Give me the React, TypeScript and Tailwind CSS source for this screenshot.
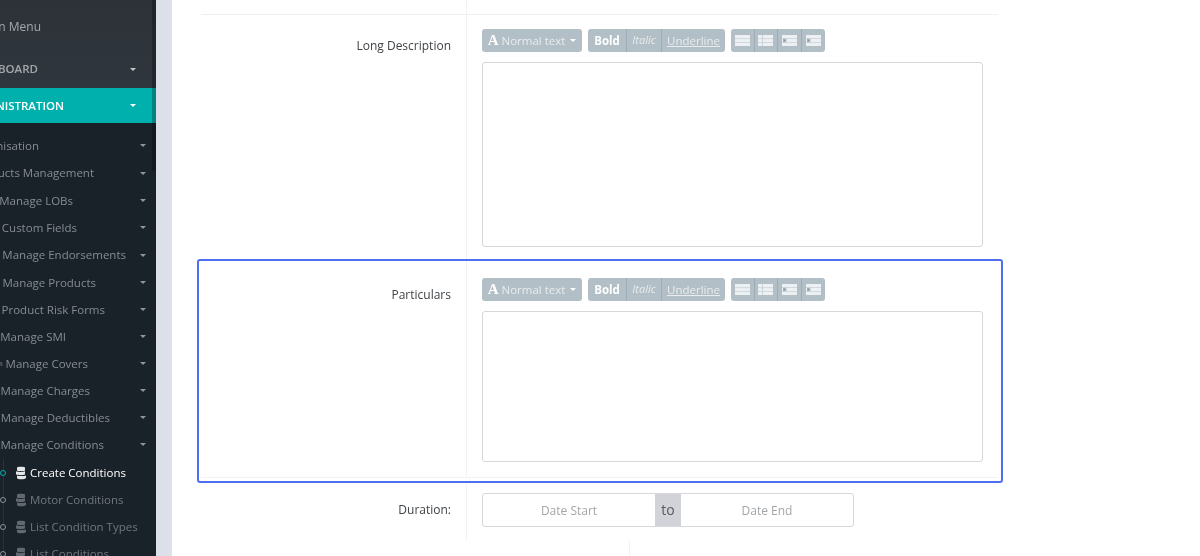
const font = { fontFamily: '"Open Sans", "Noto Sans", sans-serif' }

const menu = [
  { label: 'Organisation', end: 'w-[39px]', h: 'h-[27px]' },
  { label: 'Products Management', end: 'w-[94px]', h: 'h-[28px]' },
  { label: 'Manage LOBs', end: 'w-[73px]', h: 'h-[27px]' },
  { label: 'Custom Fields', end: 'w-[77px]', h: 'h-[27px]' },
  { label: 'Manage Endorsements', end: 'w-[126px]', h: 'h-[28px]' },
  { label: 'Manage Products', end: 'w-[96px]', h: 'h-[27px]' },
  { label: 'Product Risk Forms', end: 'w-[105px]', h: 'h-[27px]' },
  { label: 'Manage SMI', end: 'w-[66px]', h: 'h-[27px]' },
  { label: 'Manage Covers', end: 'w-[88px]', h: 'h-[27px]', icon: true },
  { label: 'Manage Charges', end: 'w-[90px]', h: 'h-[27px]' },
  { label: 'Manage Deductibles', end: 'w-[110px]', h: 'h-[27px]' },
  { label: 'Manage Conditions', end: 'w-[104px]', h: 'h-[27px]' },
]

const subMenu = [
  { label: 'Create Conditions', active: true },
  { label: 'Motor Conditions', active: false },
  { label: 'List Condition Types', active: false },
  { label: 'List Conditions', active: false },
]

function Caret({ color = 'border-t-[#8e959b]' }: { readonly color?: string }) {
  return <span className={`h-0 w-0 border-x-[3.5px] border-t-[3.5px] border-x-transparent ${color}`} />
}

function StackIcon({ color }: { readonly color: string }) {
  return (
    <svg width="10" height="14" viewBox="0 0 10 14" fill={color}>
      <path d="M1 1.5C1 .4 9 .4 9 1.5V4.4C9 5.2 1 5.2 1 4.4Z" />
      <path d="M0 5.3C2 6.1 7 6.1 9 5.3V8.6C7 9.4 2 9.4 0 8.6Z" />
      <path d="M1 9.5C3 10.3 8 10.3 10 9.5V12C9 13.8 1 13.8 1 12Z" />
    </svg>
  )
}

function Sidebar() {
  return (
    <aside className="relative w-[156px] shrink-0 overflow-hidden bg-[#1a2229] text-[11.5px]">
      <div className="h-[88px] bg-gradient-to-b from-[#2c3238] to-[#30363d] text-[#a3a8ac]">
        <div className="flex h-[54px] items-center">
          <div className="flex w-[41px] justify-end whitespace-nowrap text-[12px]">Main Menu</div>
        </div>
        <div className="flex h-[30px] items-center pr-[20px] font-semibold">
          <div className="flex w-[38px] justify-end whitespace-nowrap">DASHBOARD</div>
          <span className="ml-auto flex">
            <Caret color="border-t-[#c4c7ca]" />
          </span>
        </div>
      </div>

      <div className="flex h-[35px] items-center bg-[#00b0ad] pr-[20px] font-semibold text-white">
        <div className="flex w-[64px] justify-end whitespace-nowrap">ADMINISTRATION</div>
        <span className="ml-auto flex">
          <Caret color="border-t-white" />
        </span>
      </div>

      <div className="pt-[9px] text-[#868c91]">
        {menu.map((item) => (
          <div key={item.label} className={`flex items-center pr-[10px] ${item.h}`}>
            <div className={`flex items-center justify-end gap-[3px] whitespace-nowrap ${item.end}`}>
              {item.icon && <StackIcon color="#61686e" />}
              {item.label}
            </div>
            <span className="ml-auto flex">
              <Caret />
            </span>
          </div>
        ))}
        <div className="relative mt-[1px]">
          <div className="absolute bottom-0 left-[3px] top-0 w-px bg-[#2a333a]" />
          {subMenu.map((sub) => (
            <div key={sub.label} className="relative flex h-[27px] items-center">
              <span
                className={`h-[6px] w-[6px] rounded-full border bg-[#1a2229] ${
                  sub.active ? 'border-[#00b0ad]' : 'border-[#8e959b]'
                }`}
              />
              <span className="ml-[10px] flex">
                <StackIcon color={sub.active ? '#e4e6e8' : '#61686e'} />
              </span>
              <span className={`ml-[4px] whitespace-nowrap ${sub.active ? 'text-white' : 'text-[#70777c]'}`}>
                {sub.label}
              </span>
            </div>
          ))}
        </div>
      </div>

      {/* scrollbar thumb */}
      <div className="absolute right-0 top-0 h-[171px] w-[4px] bg-black/25" />
    </aside>
  )
}

function ListIcon({ kind }: { readonly kind: number }) {
  return (
    <svg width="15" height="11" viewBox="0 0 15 11">
      <rect width="15" height="11" fill="#eef1f3" />
      {kind === 0 && (
        <>
          <rect x="0" y="3.4" width="15" height="0.7" fill="#c3ced4" />
          <rect x="0" y="7" width="15" height="0.7" fill="#c3ced4" />
        </>
      )}
      {kind === 1 && (
        <>
          <rect x="4" y="0" width="0.8" height="11" fill="#c3ced4" />
          <rect x="0" y="3.4" width="15" height="0.7" fill="#c3ced4" />
          <rect x="0" y="7" width="15" height="0.7" fill="#c3ced4" />
        </>
      )}
      {kind >= 2 && (
        <>
          <rect x="0" y="3" width="15" height="0.7" fill="#c3ced4" />
          <rect x="0" y="7.3" width="15" height="0.7" fill="#c3ced4" />
          <rect x="1" y="3.7" width="3.5" height="3.6" fill="#b2bfc6" />
          <path d="M1.6 4L3.6 5.5L1.6 7Z" fill="#8a8f98" />
        </>
      )}
    </svg>
  )
}

function EditorToolbar() {
  return (
    <div className="flex h-[23px] gap-[6px] text-[11.5px] text-[#e8ecee]">
      <div className="flex w-[100px] items-center justify-center gap-[3px] rounded-[3px] bg-[#b2bfc6]">
        <span className="text-[15px] font-bold text-white" style={{ fontFamily: '"Liberation Serif", serif' }}>
          A
        </span>
        <span>Normal text</span>
        <span className="ml-[2px] flex">
          <Caret color="border-t-white" />
        </span>
      </div>
      <div className="flex divide-x divide-[#9eadb5] overflow-hidden rounded-[3px] bg-[#b2bfc6]">
        <div className="flex w-[39px] items-center justify-center text-[11.5px] font-bold text-white">Bold</div>
        <div className="flex w-[35px] items-center justify-center text-[11px] italic">Italic</div>
        <div className="flex w-[63px] items-center justify-center underline">Underline</div>
      </div>
      <div className="flex divide-x divide-[#9eadb5] overflow-hidden rounded-[3px] bg-[#b2bfc6]">
        {[0, 1, 2, 3].map((kind) => (
          <div key={kind} className="flex w-[23.5px] items-center justify-center">
            <ListIcon kind={kind} />
          </div>
        ))}
      </div>
    </div>
  )
}

function Label({ text }: { readonly text: string }) {
  return <div className="w-[250px] shrink-0 text-right text-[12px] text-[#3f4347]">{text}</div>
}

export default function App() {
  return (
    <div className="flex h-[556px] w-[1200px] overflow-hidden bg-white blur-[0.4px]" style={font}>
      <Sidebar />
      <div className="w-[16px] shrink-0 bg-[#dce1e9]" />
      <main className="flex-1 pl-[29px]">
        <div className="w-[797px]">
          {/* previous row */}
          <div className="h-[15px] border-b border-[#f0f0f0]">
            <div className="ml-[265px] h-full w-px bg-[#f2f2f2]" />
          </div>

          {/* Long Description */}
          <div className="flex h-[244px]">
            <div className="w-[266px] shrink-0 border-r border-[#f2f2f2] pr-[15px] pt-[22px]">
              <Label text="Long Description" />
            </div>
            <div className="flex-1 pl-[15px] pt-[14px]">
              <EditorToolbar />
              <div className="mt-[10px] h-[185px] w-[501px] rounded-[3px] border border-[#d5d7da] bg-white" />
            </div>
          </div>

          {/* Particulars, focused */}
          <div className="-ml-[4px] -mr-[5px] flex h-[224px] rounded-[3px] border-2 border-[#4f6ff0]">
            <div className="ml-[2px] mr-[3px] flex h-[217px] flex-1 border-b border-[#f2f2f2]">
              <div className="w-[266px] shrink-0 border-r border-[#f2f2f2] pr-[15px] pt-[25px]">
                <Label text="Particulars" />
              </div>
              <div className="flex-1 pl-[15px] pt-[17px]">
                <EditorToolbar />
                <div className="mt-[10px] h-[151px] w-[501px] rounded-[3px] border border-[#d5d7da] bg-white" />
              </div>
            </div>
          </div>

          {/* Duration */}
          <div className="flex h-[58px]">
            <div className="w-[266px] shrink-0 border-r border-[#f2f2f2] pr-[15px] pt-[18px]">
              <Label text="Duration:" />
            </div>
            <div className="flex-1 pl-[15px] pt-[10px]">
              <div className="flex h-[34px] w-[372px] overflow-hidden rounded-[3px] border border-[#d5d7da] text-[12px] text-[#a3a6a9]">
                <div className="flex w-[172px] items-center justify-center pt-[1px]">Date Start</div>
                <div className="flex w-[26px] items-center justify-center bg-[#d2d3d8] pb-[1px] text-[14px] text-[#555a5f]">
                  to
                </div>
                <div className="flex flex-1 items-center justify-center pt-[1px]">Date End</div>
              </div>
            </div>
          </div>

          {/* next row */}
          <div className="h-[15px]">
            <div className="ml-[428px] h-full w-px bg-[#f2f2f2]" />
          </div>
        </div>
      </main>
    </div>
  )
}
